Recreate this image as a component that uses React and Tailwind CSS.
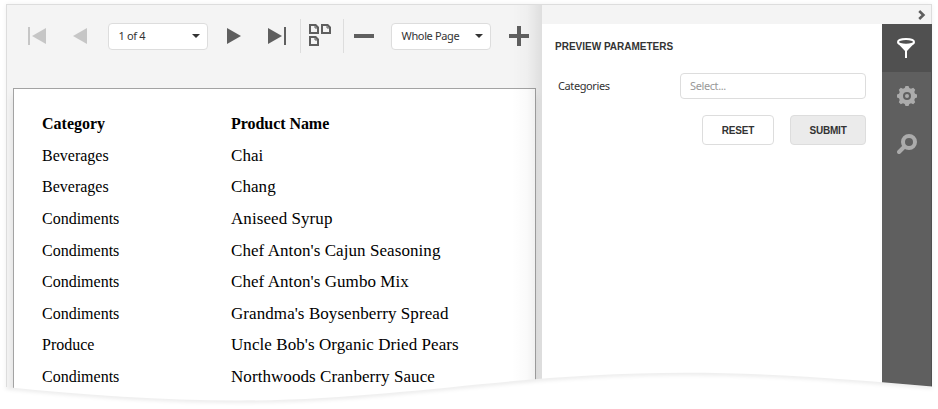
const rows = [
  ['Beverages', 'Chai'],
  ['Beverages', 'Chang'],
  ['Condiments', 'Aniseed Syrup'],
  ['Condiments', "Chef Anton's Cajun Seasoning"],
  ['Condiments', "Chef Anton's Gumbo Mix"],
  ['Condiments', "Grandma's Boysenberry Spread"],
  ['Produce', "Uncle Bob's Organic Dried Pears"],
  ['Condiments', 'Northwoods Cranberry Sauce'],
];

function Picker({ label, className }) {
  return (
    <button className={`flex h-[27px] w-[100px] shrink-0 items-center justify-between rounded-[4px] border border-[#dddddd] bg-white pl-[9.5px] pr-[7px] text-[11px] tracking-[-0.35px] text-[#333] ${className}`}>
      <span className="whitespace-nowrap">{label}</span>
      <svg width="8" height="4" viewBox="0 0 8 4" fill="#333"><path d="M0 0h8L4 4z" /></svg>
    </button>
  );
}

function Toolbar() {
  return (
    <div className="flex h-[62px] shrink-0 items-center pl-[21px]">
      <svg className="shrink-0" width="18" height="18" viewBox="0 0 18 18" fill="#c6c6c6"><path d="M0 0h2v18H0zM18 1v16L4 9z" /></svg>
      <svg className="ml-[27px] shrink-0" width="14" height="16" viewBox="0 0 14 16" fill="#c6c6c6"><path d="M14 0v16L0 8z" /></svg>
      <Picker label="1 of 4" className="ml-[21px]" />
      <svg className="ml-[19px] shrink-0" width="14" height="16" viewBox="0 0 14 16" fill="#5f5f5f"><path d="M0 0v16l14-8z" /></svg>
      <svg className="ml-[27px] shrink-0" width="18" height="18" viewBox="0 0 18 18" fill="#5f5f5f"><path d="M16 0h2v18h-2zM0 1v16l14-8z" /></svg>
      <span className="ml-[14px] h-[34px] w-px shrink-0 bg-[#dddddd]" />
      <svg className="ml-[8px] mt-[-2px] shrink-0" width="22" height="22" viewBox="0 0 22 22" fill="none" stroke="#5f5f5f" strokeWidth="2">
        <path d="M1 1h5.6L9 3.5V9H1z" />
        <path d="M13 1h5.6L21 3.5V9h-8z" />
        <path d="M1 13h5.6L9 15.5V21H1z" />
        <path d="M6 1v3h3M18 1v3h3M6 13v3h3" strokeWidth="1" />
      </svg>
      <span className="ml-[12px] h-[34px] w-px shrink-0 bg-[#dddddd]" />
      <span className="ml-[10px] h-[4px] w-[20px] shrink-0 bg-[#5f5f5f]" />
      <Picker label="Whole Page" className="ml-[17px]" />
      <svg className="ml-[18px] shrink-0" width="20" height="20" viewBox="0 0 20 20" fill="#5f5f5f"><path d="M8 0h4v8h8v4h-8v8H8v-8H0V8h8z" /></svg>
    </div>
  );
}

function Report() {
  return (
    <div className="ml-[6px] mt-[21px] h-[330px] w-[523px] border border-[#a3a3a3] bg-white pl-[28px] pt-[19px] font-['Liberation_Serif',serif] text-[16px] text-black shadow-[0_8px_8px_rgba(0,0,0,0.1)]">
      <div className="flex h-[31.6px] items-center whitespace-nowrap font-bold">
        <span className="w-[189px]">Category</span><span className="tracking-[-0.05px]">Product Name</span>
      </div>
      {rows.map(([category, product], i) => (
        <div key={i} className="flex h-[31.6px] items-center whitespace-nowrap">
          <span className="w-[189px] pt-px text-[16px]">{category}</span>
          <span className="pt-[0.5px] text-[17px] tracking-[0.07px]">{product}</span>
        </div>
      ))}
    </div>
  );
}

function Tabs() {
  return (
    <nav className="flex w-[50px] flex-col border-r border-[#505050] bg-[#5f5f5f]">
      <div className="flex h-[48px] items-center justify-center bg-[#505050] pr-px">
        <svg width="18" height="20" viewBox="0 0 18 20">
          <path d="M0 4.500 8 13v7h2v-7l8-8.500z" fill="#fff" />
          <ellipse cx="9" cy="3.900" rx="8" ry="2.900" fill="#505050" stroke="#fff" strokeWidth="2" />
        </svg>
      </div>
      <div className="flex h-[48px] items-center justify-center">
        <svg width="20" height="20" viewBox="0 0 20 20">
          <path fill="#ababab" fillRule="evenodd" d="M8.500 0h3l.8 2 1.700.7 2.200-.9 2 2-.9 2.200.7 1.700 2 .8v3l-2 .8-.7 1.700.9 2.200-2 2-2.200-.9-1.700.7-.8 2h-3l-.8-2-1.700-.7-2.200.9-2-2 .9-2.200-.7-1.700-2-.8v-3l2-.8.7-1.700-.9-2.200 2-2 2.200.9 1.700-.7zM10 6a4 4 0 1 0 0 8 4 4 0 0 0 0-8z" />
          <circle cx="10" cy="10" r="2" fill="#ababab" />
        </svg>
      </div>
      <div className="flex h-[48px] items-center justify-center">
        <svg width="20" height="20" viewBox="0 0 20 20" fill="none" stroke="#ababab">
          <circle cx="12" cy="8" r="6" strokeWidth="4" />
          <path d="M7.500 12.500 2 18" strokeWidth="4" strokeLinecap="round" />
        </svg>
      </div>
    </nav>
  );
}

function Parameters() {
  return (
    <section className="flex-1 bg-white pl-[13px] pr-[16px] pt-[15px]">
      <h2 className="h-[16px] whitespace-nowrap font-['Liberation_Sans',sans-serif] text-[10px] font-bold leading-[16px] tracking-[0px] text-[#333]">PREVIEW PARAMETERS</h2>
      <div className="mt-[18px] flex h-[26px] items-center justify-between pl-[3px]">
        <label className="text-[11px] tracking-[-0.4px] text-[#333]">Categories</label>
        <div className="flex h-[26px] w-[186px] items-center rounded-[4px] border border-[#dddddd] pl-[9px] text-[11px] tracking-[-0.4px] text-[#999]">Select...</div>
      </div>
      <div className="mt-[16px] flex justify-end gap-[16px] font-['Liberation_Sans',sans-serif] text-[10px] font-bold tracking-[-0.2px] text-[#333]">
        <button className="h-[30px] w-[72px] rounded-[4px] border border-[#dddddd] bg-white">RESET</button>
        <button className="h-[30px] w-[76px] rounded-[4px] border border-[#dddddd] bg-[#ebebeb]">SUBMIT</button>
      </div>
    </section>
  );
}

export default function App() {
  return (
    <div className="relative h-[409px] w-[938px] overflow-hidden bg-white pl-[6px] pt-[4px] font-['Noto_Sans',sans-serif]">
      <div className="flex h-[405px] w-[926px] border-l border-t border-[#dddddd] bg-[#f4f4f4] shadow-[0_0_5px_rgba(0,0,0,0.06)]">
        <div className="relative w-[535px] shrink-0 overflow-hidden">
          <Toolbar />
          <Report />
          <div className="pointer-events-none absolute inset-y-0 right-0 w-[30px] bg-linear-to-r from-transparent via-black/2 to-black/9" />
        </div>
        <div className="flex flex-1 flex-col">
          <div className="flex h-[19px] items-center justify-end border-r border-[#dddddd] pr-[5px]">
            <svg width="8" height="10" viewBox="0 0 8 10" fill="none" stroke="#5f5f5f" strokeWidth="2.6"><path d="m1.200 1 4.200 4-4.200 4" /></svg>
          </div>
          <div className="flex flex-1">
            <Parameters />
            <Tabs />
          </div>
        </div>
      </div>
      <svg className="absolute left-0 top-0" width="938" height="409" viewBox="0 0 938 409">
        <defs>
          <filter id="edge" x="-5%" y="-50%" width="110%" height="200%"><feGaussianBlur stdDeviation="2" /></filter>
          <clipPath id="below"><path d="M0 386.500 6 387C85 395 160 400.500 240 400.500C370 400 480 381 590 375.500C720 368 830 377.500 932 386.500l6 .5V409H0z" /></clipPath>
        </defs>
        <path d="M0 386.500 6 387C85 395 160 400.500 240 400.500C370 400 480 381 590 375.500C720 368 830 377.500 932 386.500l6 .5V409H0z" fill="#fff" />
        <g clipPath="url(#below)">
          <path d="M6 387C85 395 160 400.500 240 400.500C370 400 480 381 590 375.500C720 368 830 377.500 932 386.500" fill="none" stroke="#000" strokeOpacity=".12" strokeWidth="3" filter="url(#edge)" />
        </g>
      </svg>
    </div>
  );
}
